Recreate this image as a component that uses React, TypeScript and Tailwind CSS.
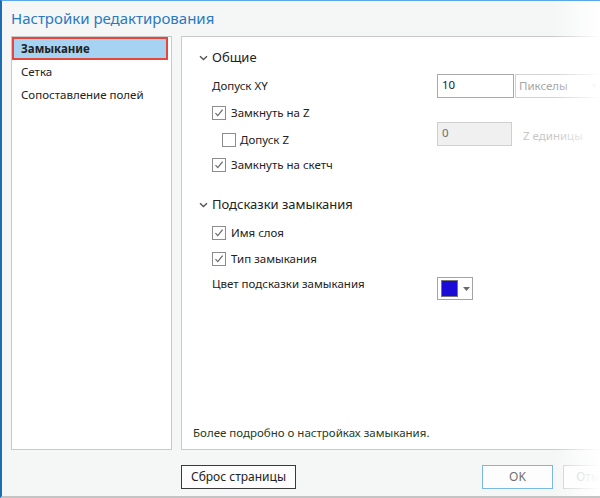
import React, { useState } from 'react';

const font = { fontFamily: '"Noto Sans", "Open Sans", sans-serif' };

const Chevron: React.FC = () => (
  <svg width="9" height="6" viewBox="0 0 9 6" className="mr-[4px]">
    <path d="M1 1.2 L4.5 4.6 L8 1.2" fill="none" stroke="#555" strokeWidth="1.4" />
  </svg>
);

const CheckBox: React.FC<{ checked: boolean; onToggle?: () => void }> = ({ checked, onToggle }) => (
  <span
    onClick={onToggle}
    className="flex h-[14px] w-[14px] shrink-0 items-center justify-center border border-[#8c8c8c] bg-white"
  >
    {checked && (
      <svg width="10" height="10" viewBox="0 0 10 10">
        <path d="M1.5 5.2 L3.8 7.6 L8.6 1.6" fill="none" stroke="#666" strokeWidth="1.2" />
      </svg>
    )}
  </span>
);

export default function App() {
  const [snapZ, setSnapZ] = useState(true);
  const [tolZ, setTolZ] = useState(false);
  const [sketch, setSketch] = useState(true);
  const [layerName, setLayerName] = useState(true);
  const [snapType, setSnapType] = useState(true);

  return (
    <div
      style={font}
      className="relative h-[498px] w-[600px] overflow-hidden border-b-2 border-l-2 border-t border-b-[#c4c4c4] border-l-[#1d6db5] border-t-[#5aa6e6] bg-[#f5f7f6] text-[11.5px] text-[#222]"
    >
      <div className="h-[35px] pl-[9px] pt-[6px] text-[15px] leading-[22px] text-[#2a79c0]">Настройки редактирования</div>

      <div className="flex h-[414px] gap-[9px] pl-[9px]">
        <div className="w-[161px] shrink-0 border border-[#c9c9c9] bg-white">
          <div className="flex h-[23px] w-[156px] items-center border-2 border-[#e5473d] bg-[#a6d3f2] pl-[7px] font-bold text-[#222]">
            Замыкание
          </div>
          <div className="flex h-[23px] items-center pl-[9px]">Сетка</div>
          <div className="flex h-[23px] items-center pl-[9px]">Сопоставление полей</div>
        </div>

        <div className="flex w-[440px] shrink-0 flex-col border border-[#c9c9c9] bg-white pl-[17px]">
          <div className="mt-[10px] flex h-[22px] items-center text-[13px]">
            <Chevron />
            Общие
          </div>

          <div className="mt-[5px] flex h-[24px] items-center pl-[13px]">
            <span className="w-[225px] shrink-0">Допуск XY</span>
            <div className="flex h-[24px] w-[77px] shrink-0 items-center border border-[#a9a9a9] bg-white pl-[4px] pb-[2px]">10</div>
            <div className="ml-[1px] flex h-[24px] w-[90px] shrink-0 items-center justify-between border border-[#d2d2d2] bg-white pl-[3px] pr-[6px] text-[#a6a6a6]">
              Пикселы
              <svg width="7" height="4" viewBox="0 0 7 4">
                <path d="M0 0 L7 0 L3.5 4 Z" fill="#cfcfcf" />
              </svg>
            </div>
          </div>

          <div className="mt-[6px] flex h-[18px] items-center gap-[5px] pl-[13px]">
            <CheckBox checked={snapZ} onToggle={() => setSnapZ(!snapZ)} />
            Замкнуть на Z
          </div>

          <div className="flex h-[24px] items-start pl-[23px]">
            <div className="flex w-[215px] shrink-0 items-center gap-[4px] pt-[9px]">
              <CheckBox checked={tolZ} onToggle={() => setTolZ(!tolZ)} />
              Допуск Z
            </div>
            <div className="flex h-[24px] w-[75px] shrink-0 items-center border border-[#cfcfcf] bg-[#f0f0f0] pb-[2px] pl-[4px] text-[#6d6d6d]">0</div>
            <span className="ml-[11px] mt-[5px] shrink-0 text-[#c8c8c8]">Z единицы</span>
          </div>

          <div className="mt-[10px] flex h-[18px] items-center gap-[5px] pl-[13px]">
            <CheckBox checked={sketch} onToggle={() => setSketch(!sketch)} />
            Замкнуть на скетч
          </div>

          <div className="mt-[20px] flex h-[22px] items-center text-[13px]">
            <Chevron />
            Подсказки замыкания
          </div>

          <div className="mt-[8px] flex h-[18px] items-center gap-[5px] pl-[13px]">
            <CheckBox checked={layerName} onToggle={() => setLayerName(!layerName)} />
            Имя слоя
          </div>

          <div className="mt-[8px] flex h-[18px] items-center gap-[5px] pl-[13px]">
            <CheckBox checked={snapType} onToggle={() => setSnapType(!snapType)} />
            Тип замыкания
          </div>

          <div className="mt-[9px] flex items-start pl-[13px]">
            <span className="w-[225px] shrink-0 leading-[14px]">Цвет подсказки замыкания</span>
            <div className="flex h-[23px] w-[36px] shrink-0 items-center border border-[#a3a3a3] bg-white pl-[3px]">
              <span className="h-[17px] w-[17px] border border-[#777] bg-[#1a0cd6]" />
              <svg width="7" height="4" viewBox="0 0 7 4" className="ml-[5px]">
                <path d="M0 0 L7 0 L3.5 4 Z" fill="#6a6a6a" />
              </svg>
            </div>
          </div>

          <div className="mt-auto mb-[8px] -ml-[6px] leading-[16px] text-[#213d25]">Более подробно о настройках замыкания.</div>
        </div>
      </div>

      <div className="flex h-[46px] items-start pl-[179px] pt-[15px]">
        <button className="flex h-[24px] w-[115px] shrink-0 items-center justify-center border border-[#3a3a3a] bg-[#fdfdfd] text-[12px] text-[#222]">
          Сброс страницы
        </button>
        <button className="ml-[186px] flex h-[24px] w-[71px] shrink-0 items-center justify-center border border-[#7ab6e8] bg-[#fdfdfd] text-[12px] text-[#707070]">
          OK
        </button>
        <button className="ml-[10px] flex h-[24px] w-[71px] shrink-0 items-center justify-center border border-[#cfcfcf] bg-[#fdfdfd] text-[12px] text-[#c0c0c0]">
          Отмена
        </button>
      </div>

      <div className="pointer-events-none absolute right-0 top-0 h-full w-[46px] bg-gradient-to-r from-transparent to-white" />
    </div>
  );
}
